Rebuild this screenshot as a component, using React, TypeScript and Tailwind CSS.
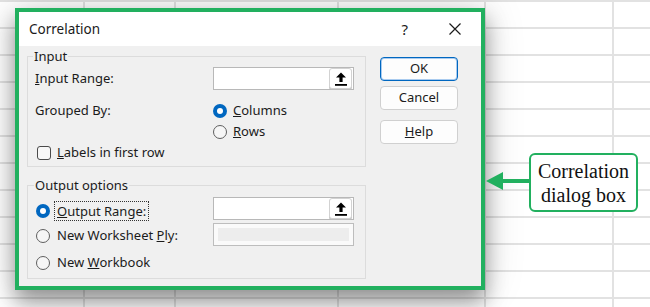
import React from "react";

function Radio({ checked }: { checked?: boolean }) {
  return checked ? (
    <span className="w-[14px] h-[14px] rounded-full bg-[#0067c0] flex items-center justify-center shrink-0">
      <span className="block w-[6px] h-[6px] rounded-full bg-white" />
    </span>
  ) : (
    <span className="block w-[14px] h-[14px] rounded-full border border-[#5f5f5f] bg-[#f6f6f6] shrink-0" />
  );
}

function UploadIcon() {
  return (
    <svg width="12" height="14" viewBox="0 0 12 14">
      <path d="M6 0.5 L11 5.5 H7.6 V10 H4.4 V5.5 H1 Z" fill="#000" />
      <rect x="0" y="12" width="12" height="1.8" fill="#000" />
    </svg>
  );
}

function RangeBox() {
  return (
    <div className="w-[141px] h-[23px] border border-[#b8b8b8] bg-white flex items-center justify-end pr-[1px]">
      <div className="w-[23px] h-[21px] border border-[#d2d2d2] rounded-[3px] bg-white flex items-center justify-center shadow-[0_1px_0_#bdbdbd]">
        <UploadIcon />
      </div>
    </div>
  );
}

function DisabledBox() {
  return (
    <div className="w-[141px] h-[23px] border border-[#bdbdbd] bg-[#fafafa] p-[4px]">
      <div className="w-full h-full bg-[#ededed]" />
    </div>
  );
}

function Btn({ children, primary }: { children: React.ReactNode; primary?: boolean }) {
  return (
    <div
      className={
        primary
          ? "w-[78px] h-[24px] rounded-[4px] border border-[#0067c0] shadow-[inset_0_0_0_1px_#a9cbef] bg-[#fdfdfd] flex items-center justify-center"
          : "w-[78px] h-[24px] rounded-[4px] border border-[#d0d0d0] bg-[#fdfdfd] flex items-center justify-center"
      }
    >
      {children}
    </div>
  );
}

const gridRows = Array.from({ length: 12 });

export default function App() {
  return (
    <div className="relative w-[650px] h-[307px] overflow-hidden bg-white" style={{ fontFamily: '"Noto Sans", sans-serif' }}>
      {/* spreadsheet grid */}
      <div className="grid grid-cols-[85px_91px_163px_147px_128px_1fr]">
        {gridRows.map((_, r) => (
          <React.Fragment key={r}>
            <div className="h-[27px] border-t-2 border-r-2 border-[#e2e2e2]" />
            <div className="h-[27px] border-t-2 border-r-2 border-[#e2e2e2]" />
            <div className="h-[27px] border-t-2 border-r-2 border-[#e2e2e2]" />
            <div className="h-[27px] border-t-2 border-r-2 border-[#e2e2e2]" />
            <div className="h-[27px] border-t-2 border-r-2 border-[#e2e2e2]" />
            <div className="h-[27px] border-t-2 border-[#e2e2e2]" />
          </React.Fragment>
        ))}
      </div>

      {/* dialog window */}
      <div className="absolute left-[15px] top-[8px] w-[470px] h-[282px] border-4 border-[#22b05f] flex flex-col text-[13px] text-[#1b1b1b] shadow-[0_12px_20px_rgba(0,0,0,0.38),0_0_40px_rgba(0,0,0,0.14)]">
        {/* title bar */}
        <div className="h-[34px] bg-white flex items-center pl-[10px] pr-[20px]">
          <span className="text-[13.5px]">Correlation</span>
          <div className="ml-auto flex items-center gap-[41px]">
            <span className="text-[15px] leading-none">?</span>
            <svg width="12" height="12" viewBox="0 0 12 12">
              <path d="M0.5 0.5 L11.5 11.5 M11.5 0.5 L0.5 11.5" stroke="#1b1b1b" strokeWidth="1.2" />
            </svg>
          </div>
        </div>

        {/* body */}
        <div className="flex-1 bg-[#f0f0f0] flex pl-[8px]">
          <div className="w-[339px] flex flex-col">
            {/* Input group */}
            <div className="relative mt-[10px] h-[111px] border border-[#dcdcdc] pt-[10px] pl-[7px] flex flex-col">
              <span className="absolute left-[5px] top-[-10px] px-[1px] bg-[#f0f0f0] leading-[18px]">Input</span>
              <div className="h-[23px] flex items-center">
                <span className="w-[178px]">
                  <u>I</u>nput Range:
                </span>
                <RangeBox />
              </div>
              <div className="mt-[10px] h-[21px] flex items-center">
                <span className="w-[178px]">Grouped By:</span>
                <Radio checked />
                <span className="ml-[6px]">
                  <u>C</u>olumns
                </span>
              </div>
              <div className="h-[21px] flex items-center">
                <span className="w-[178px]" />
                <Radio />
                <span className="ml-[6px]">
                  <u>R</u>ows
                </span>
              </div>
              <div className="h-[21px] flex items-center">
                <span className="ml-[2px] w-[14px] h-[14px] rounded-[3px] border border-[#4a4a4a] bg-[#f7f7f7]" />
                <span className="ml-[6px]">
                  <u>L</u>abels in first row
                </span>
              </div>
            </div>

            {/* Output group */}
            <div className="relative mt-[18px] h-[94px] border border-[#dcdcdc] pt-[11px] pl-[7px] flex flex-col">
              <span className="absolute left-[6px] top-[-10px] px-[1px] bg-[#f0f0f0] leading-[18px]">Output options</span>
              <div className="h-[23px] flex items-center">
                <div className="w-[178px] flex items-center pt-[4px]">
                  <span className="ml-[1px] block">
                    <Radio checked />
                  </span>
                  <span className="ml-[4px] px-[2px] border border-dotted border-[#333] leading-[18px]">
                    <u>O</u>utput Range:
                  </span>
                </div>
                <RangeBox />
              </div>
              <div className="mt-[3px] h-[23px] flex items-center">
                <div className="w-[178px] flex items-center pt-[2px]">
                  <span className="ml-[1px] block">
                    <Radio />
                  </span>
                  <span className="ml-[7px]">
                    New Worksheet <u>P</u>ly:
                  </span>
                </div>
                <DisabledBox />
              </div>
              <div className="mt-[6px] h-[21px] flex items-center">
                <span className="ml-[1px] block">
                  <Radio />
                </span>
                <span className="ml-[7px]">
                  New <u>W</u>orkbook
                </span>
              </div>
            </div>
          </div>

          {/* buttons */}
          <div className="ml-[14px] pt-[11px] flex flex-col">
            <Btn primary>OK</Btn>
            <div className="mt-[5px]">
              <Btn>Cancel</Btn>
            </div>
            <div className="mt-[10px]">
              <Btn>
                <span>
                  <u>H</u>elp
                </span>
              </Btn>
            </div>
          </div>
        </div>
      </div>

      {/* arrow */}
      <svg className="absolute left-[486px] top-[171px]" width="45" height="20" viewBox="0 0 45 20">
        <path d="M0 10 L17 1 L17 19 Z" fill="#22b05f" />
        <rect x="14" y="8" width="31" height="4" fill="#22b05f" />
      </svg>

      {/* callout */}
      <div
        className="absolute left-[529px] top-[153px] w-[109px] h-[59px] rounded-[6px] border-[2.5px] border-[#22b05f] bg-white flex flex-col items-center justify-center text-[20px] leading-[24px] text-[#111]"
        style={{ fontFamily: '"Liberation Serif", serif' }}
      >
        <span>Correlation</span>
        <span>dialog box</span>
      </div>
    </div>
  );
}
